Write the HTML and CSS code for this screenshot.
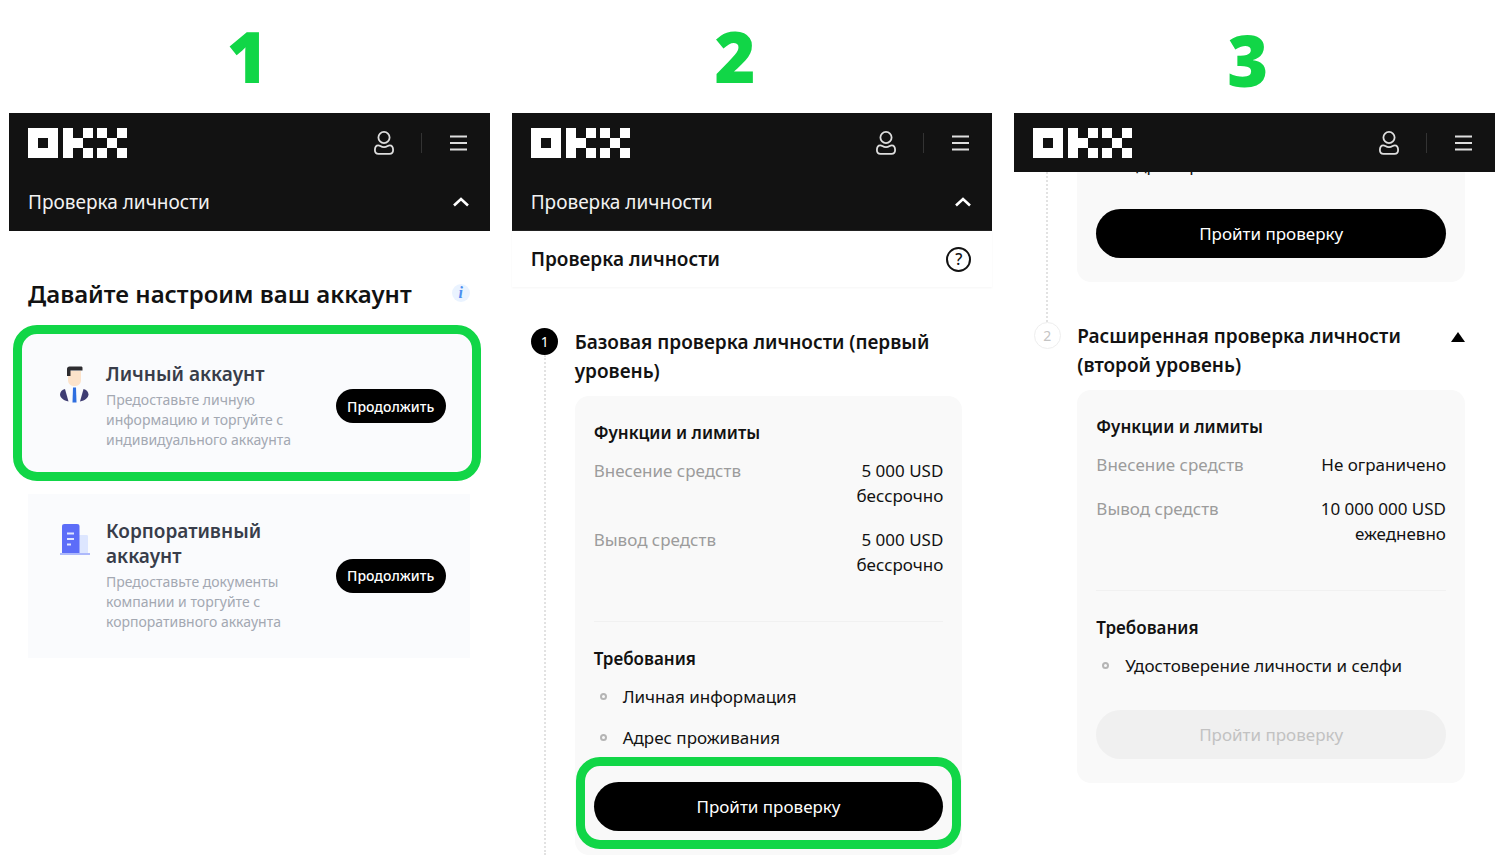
FILE: index.html
```html
<!DOCTYPE html>
<html lang="ru">
<head>
  <meta charset="utf-8">
  <title>Проверка личности</title>
  <link rel="stylesheet" href="styles.css">
</head>
<body>
  <!-- shared icons -->
  <svg class="sprite" aria-hidden="true">
    <symbol id="logo" viewBox="0 0 99 30">
      <path fill="#fff" fill-rule="evenodd" d="M0 0h30v30H0zM10 10v10h10V10z"/>
      <path fill="#fff" d="M35 0h10v10h10v10H45v10H35zM55 0h10v10H55zM55 20h10v10H55zM69 0h10v10H69zM89 0h10v10H89zM79 10h10v10H79zM69 20h10v10H69zM89 20h10v10H89z"/>
    </symbol>
    <symbol id="user" viewBox="0 0 20 24">
      <g fill="none" stroke="#dedede" stroke-width="1.8">
        <circle cx="10" cy="6.500" r="5.600"/>
        <path d="M4.300 14.300c1.800 0 2.600 1.900 5.700 1.900s3.900-1.900 5.700-1.900c2 0 3.400 2 3.400 4.700 0 2.600-1.300 3.900-3.600 3.900h-11C2.200 22.900.9 21.600.9 19c0-2.700 1.400-4.700 3.400-4.700z"/>
      </g>
    </symbol>
    <symbol id="menu" viewBox="0 0 17 16">
      <path d="M0 1.500h17M0 8h17M0 14.500h17" stroke="#dedede" stroke-width="2"/>
    </symbol>
    <symbol id="chevron" viewBox="0 0 16 10">
      <path d="M1 8.500l7-6.500 7 6.500" fill="none" stroke="#fff" stroke-width="2.600"/>
    </symbol>
  </svg>

  <main class="steps">
    <section class="column">
      <h2 class="number number-one">1</h2>
      <div class="topbar">
        <a href="#" aria-label="OKX"><svg class="logo"><use href="#logo"/></svg></a>
        <div class="tools">
          <button class="icon-button user" aria-label="Профиль"><svg width="20" height="24"><use href="#user"/></svg></button>
          <button class="icon-button" aria-label="Меню"><svg width="17" height="16"><use href="#menu"/></svg></button>
        </div>
      </div>
      <button class="section-toggle">Проверка личности <svg width="16" height="10"><use href="#chevron"/></svg></button>

      <div class="setup">
        <div class="setup-head">
          <h1>Давайте настроим ваш аккаунт</h1>
          <span class="info">i</span>
        </div>

        <div class="account highlighted">
          <svg class="account-icon" width="30" height="38" viewBox="0 0 30 38">
            <path fill="#fce3cb" d="M8 5h13v9c0 4-3 6-6.500 6S8 18 8 14z"/>
            <path fill="#2d2c30" d="M7 10V3c0-1.500 1-2.500 2.500-2.500H21c1 0 1.500.5 1.500 1.500v2.500h-12V10z"/>
            <path fill="#3e3c72" d="M5 23l3.500 12.500C3.500 34.500 0 31.500 0 28.500c0-2.500 2-4.800 5-5.500z"/>
            <path fill="#3e3c72" d="M23.500 23L20 35.500c5-1 8.500-4 8.500-7 0-2.500-2-4.800-5-5.500z"/>
            <path fill="#2f6fe0" d="M13 21.500h3l.5 15h-4z"/>
          </svg>
          <div class="account-text">
            <h3>Личный аккаунт</h3>
            <p>Предоставьте личную информацию и торгуйте с индивидуального аккаунта</p>
          </div>
          <button class="continue">Продолжить</button>
        </div>

        <div class="account">
          <svg class="account-icon" width="30" height="38" viewBox="0 0 30 38">
            <path fill="#dde6ff" d="M18 12h8.500c1 0 1.500.5 1.500 1.500V31H18z"/>
            <path fill="#adb9fb" d="M0 30h30v2H0z"/>
            <path fill="#5c6df8" d="M2 3.500C2 1.800 2.800 1 4.500 1H17c1.700 0 2.500.8 2.500 2.500V30H2z"/>
            <path d="M7 10.500h7M7 16h7M7 21.500h4" stroke="#dfe5ff" stroke-width="2"/>
          </svg>
          <div class="account-text">
            <h3>Корпоративный аккаунт</h3>
            <p>Предоставьте документы компании и торгуйте с корпоративного аккаунта</p>
          </div>
          <button class="continue">Продолжить</button>
        </div>
      </div>
    </section>

    <section class="column">
      <h2 class="number number-two">2</h2>
      <div class="topbar">
        <a href="#" aria-label="OKX"><svg class="logo"><use href="#logo"/></svg></a>
        <div class="tools">
          <button class="icon-button user" aria-label="Профиль"><svg width="20" height="24"><use href="#user"/></svg></button>
          <button class="icon-button" aria-label="Меню"><svg width="17" height="16"><use href="#menu"/></svg></button>
        </div>
      </div>
      <button class="section-toggle">Проверка личности <svg width="16" height="10"><use href="#chevron"/></svg></button>
      <div class="page-head">
        <h1>Проверка личности</h1>
        <button class="help" aria-label="Помощь">?</button>
      </div>

      <div class="levels">
        <article class="level">
          <div class="rail"><span class="dot">1</span></div>
          <div class="level-body">
            <div class="level-head">
              <h2>Базовая проверка личности (первый уровень)</h2>
            </div>
            <div class="card">
              <h3>Функции и лимиты</h3>
              <dl>
                <div class="limit"><dt>Внесение средств</dt><dd>5 000 USD<br>бессрочно</dd></div>
                <div class="limit"><dt>Вывод средств</dt><dd>5 000 USD<br>бессрочно</dd></div>
              </dl>
              <h3 class="needs">Требования</h3>
              <ul>
                <li>Личная информация</li>
                <li>Адрес проживания</li>
              </ul>
              <div class="action marked"><button class="verify">Пройти проверку</button></div>
            </div>
          </div>
        </article>
      </div>
    </section>

    <section class="column">
      <h2 class="number number-three">3</h2>
      <div class="topbar">
        <a href="#" aria-label="OKX"><svg class="logo"><use href="#logo"/></svg></a>
        <div class="tools">
          <button class="icon-button user" aria-label="Профиль"><svg width="20" height="24"><use href="#user"/></svg></button>
          <button class="icon-button" aria-label="Меню"><svg width="17" height="16"><use href="#menu"/></svg></button>
        </div>
      </div>

      <div class="levels scrolled">
        <article class="level">
          <div class="rail"></div>
          <div class="level-body">
            <div class="card card-rest">
              <ul>
                <li>Адрес проживания</li>
              </ul>
              <div class="action"><button class="verify">Пройти проверку</button></div>
            </div>
          </div>
        </article>
        <article class="level">
          <div class="rail rail-last"><span class="dot dot-next">2</span></div>
          <div class="level-body">
            <div class="level-head">
              <h2>Расширенная проверка личности (второй уровень)</h2>
              <button class="icon-button" aria-label="Свернуть"><svg width="14" height="10" viewBox="0 0 14 10"><path d="M7 0l7 10H0z"/></svg></button>
            </div>
            <div class="card">
              <h3>Функции и лимиты</h3>
              <dl>
                <div class="limit"><dt>Внесение средств</dt><dd>Не ограничено</dd></div>
                <div class="limit"><dt>Вывод средств</dt><dd>10 000 000 USD<br>ежедневно</dd></div>
              </dl>
              <h3 class="needs">Требования</h3>
              <ul>
                <li>Удостоверение личности и селфи</li>
              </ul>
              <div class="action"><button class="verify" disabled>Пройти проверку</button></div>
            </div>
          </div>
        </article>
      </div>
    </section>
  </main>
</body>
</html>
```

FILE: styles.css
```css
*, *::before, *::after {
  box-sizing: border-box;
}

body {
  margin: 0;
  background: #fff;
  color: #121212;
  font-family: "Noto Sans", "Open Sans", sans-serif;
  font-size: 17px;
  line-height: 25px;
}

h1, h2, h3, p, ul, dl, dd {
  margin: 0;
  padding: 0;
}

button {
  font-family: inherit;
  cursor: pointer;
}

svg {
  display: block;
}

.sprite {
  position: absolute;
  width: 0;
  height: 0;
}

.steps {
  display: grid;
  grid-template-columns: repeat(3, minmax(0, 1fr));
  gap: 22px;
  padding: 0 5px 0 9px;
}

/* big step numbers */
.number {
  height: 113px;
  color: #11d647;
  font-family: "Open Sans", sans-serif;
  font-size: 70px;
  font-weight: 800;
  line-height: 112px;
  text-align: center;
}

.number-one {
  padding-right: 4px;
}

.number-two {
  padding-right: 34px;
}

.number-three {
  padding-right: 14px;
  line-height: 120px;
}

/* black header */
.topbar {
  position: relative;
  z-index: 1;
  display: flex;
  align-items: center;
  justify-content: space-between;
  height: 59px;
  padding: 0 23px 0 19px;
  background: #121212;
}

.logo {
  width: 99px;
  height: 30px;
}

.tools {
  display: flex;
  align-items: center;
}

.icon-button {
  padding: 0;
  border: 0;
  background: none;
}

.user {
  display: flex;
  align-items: center;
  height: 20px;
  margin-right: 28px;
  padding-right: 27px;
  border-right: 1px solid #333;
}

.user svg {
  flex: none;
}

.section-toggle {
  display: flex;
  align-items: center;
  justify-content: space-between;
  width: 100%;
  height: 59px;
  padding: 0 21px 0 19px;
  border: 0;
  background: #121212;
  color: #f2f2f2;
  font-size: 19px;
}

/* account choice */
.setup {
  padding: 45px 20px 0 19px;
}

.setup-head {
  display: flex;
  align-items: center;
  justify-content: space-between;
  height: 34px;
  margin-bottom: 15px;
}

.setup-head h1 {
  font-size: 24px;
  font-weight: 600;
}

.info {
  width: 18px;
  height: 18px;
  border-radius: 50%;
  background: #eaf3ff;
  color: #4d8ff0;
  font-family: "Liberation Serif", serif;
  font-size: 16px;
  font-style: italic;
  font-weight: 700;
  line-height: 18px;
  text-align: center;
}

.account {
  display: flex;
  align-items: center;
  padding: 25px 24px 26px 32px;
  background: #fafbfd;
}

.account.highlighted {
  margin: 0 -11px 13px -15px;
  padding: 28px 26px 22px 38px;
  border: 9px solid #11d647;
  border-radius: 24px;
}

.account-icon {
  flex: none;
  align-self: flex-start;
  margin: 4px 16px 0 0;
}

.account-text {
  flex: 1;
  padding-right: 30px;
}

.account h3 {
  margin-bottom: 3px;
  color: #383d4a;
  font-size: 19px;
  font-weight: 600;
}

.account p {
  color: #a3a8b2;
  font-size: 14px;
  line-height: 20px;
}

.continue {
  flex: none;
  width: 110px;
  height: 34px;
  padding: 0;
  border: 0;
  border-radius: 17px;
  background: #000;
  color: #fff;
  font-size: 14px;
  font-weight: 500;
}

/* verification levels */
.page-head {
  display: flex;
  align-items: center;
  justify-content: space-between;
  height: 56px;
  padding: 0 21px 0 19px;
  box-shadow: 0 1px 2px #f6f6f6;
}

.page-head h1 {
  font-size: 19px;
  font-weight: 600;
}

.help {
  width: 25px;
  height: 25px;
  padding: 0;
  border: 2px solid #121212;
  border-radius: 50%;
  background: none;
  color: #121212;
  font-size: 16px;
  font-weight: 500;
  line-height: 21px;
}

.levels {
  padding: 41px 30px 0 19px;
}

.levels.scrolled {
  padding-top: 0;
}

.level {
  display: flex;
  gap: 16px;
}

.rail {
  display: flex;
  flex: none;
  flex-direction: column;
  align-items: center;
  width: 28px;
}

.rail::after {
  content: "";
  flex: 1;
  border-left: 2px dotted #e2e2e2;
}

.rail-last::after {
  display: none;
}

.dot {
  width: 27px;
  height: 27px;
  border-radius: 50%;
  background: #000;
  color: #fff;
  font-size: 14px;
  line-height: 27px;
  text-align: center;
}

.dot-next {
  border: 1px solid #eee;
  background: #fff;
  color: #c4c4c4;
  line-height: 25px;
}

.level-body {
  flex: 1;
  min-width: 0;
}

.level-head {
  display: flex;
  align-items: flex-start;
  justify-content: space-between;
  margin-bottom: 10px;
}

.level-head h2 {
  font-size: 19px;
  font-weight: 600;
  line-height: 29px;
}

.level-head .icon-button {
  padding-top: 10px;
}

.card {
  padding: 24px 19px;
  border-radius: 14px;
  background: #f9f9f9;
}

.card-rest {
  margin: -20px 0 40px;
  padding-top: 0;
}

.card h3 {
  margin-bottom: 13px;
  font-size: 17px;
  font-weight: 600;
}

.limit {
  display: flex;
  justify-content: space-between;
}

.limit + .limit {
  margin-top: 19px;
}

.limit dt {
  color: #9c9c9c;
}

.limit dd {
  text-align: right;
}

.card .needs {
  margin-top: 44px;
  padding-top: 24px;
  border-top: 1px solid #f1f1f1;
}

.card ul {
  list-style: none;
}

.card li {
  display: flex;
  align-items: center;
}

.card li::before {
  content: "";
  width: 7px;
  height: 7px;
  margin: 0 16px 0 6px;
  border: 2px solid #b5b5b5;
  border-radius: 50%;
}

.card li + li {
  margin-top: 16px;
}

.action {
  position: relative;
  margin-top: 32px;
}

.verify {
  display: block;
  width: 100%;
  height: 49px;
  padding: 0;
  border: 0;
  border-radius: 25px;
  background: #000;
  color: #fff;
  font-size: 17px;
}

.verify:disabled {
  background: #f0f0f0;
  color: #c2c2c2;
}

/* green frame round the button */
.marked::after {
  content: "";
  position: absolute;
  inset: -25px -18px -18px;
  border: 9px solid #11d647;
  border-radius: 24px;
  pointer-events: none;
}
```
